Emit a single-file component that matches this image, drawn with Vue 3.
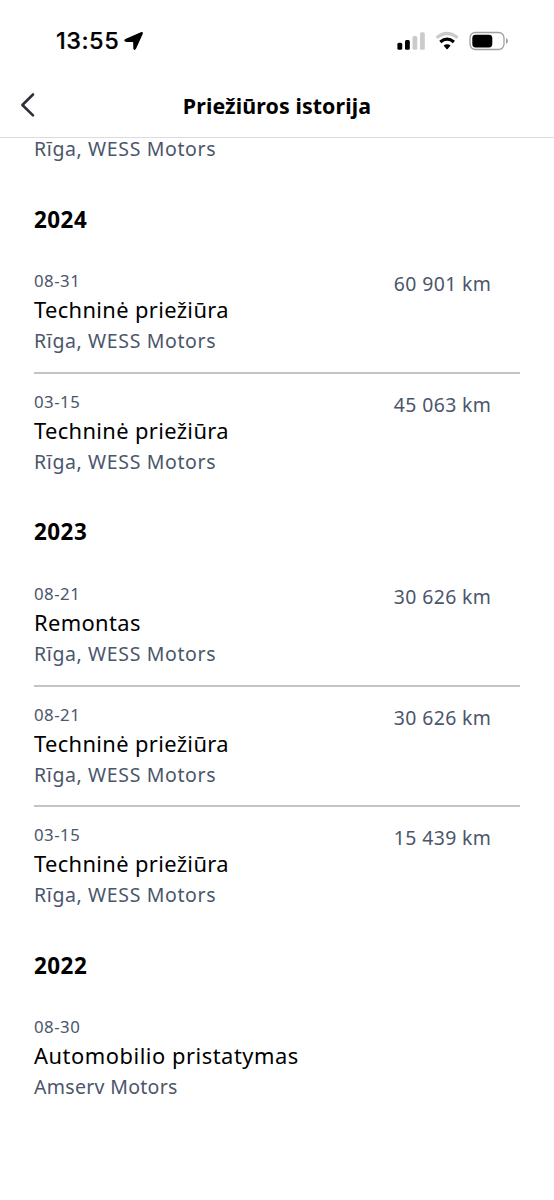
<script setup>
const groups = [
  {
    year: '2024',
    entries: [
      { date: '08-31', title: 'Techninė priežiūra', place: 'Rīga, WESS Motors', km: '60 901 km' },
      { date: '03-15', title: 'Techninė priežiūra', place: 'Rīga, WESS Motors', km: '45 063 km' },
    ],
  },
  {
    year: '2023',
    entries: [
      { date: '08-21', title: 'Remontas', place: 'Rīga, WESS Motors', km: '30 626 km' },
      { date: '08-21', title: 'Techninė priežiūra', place: 'Rīga, WESS Motors', km: '30 626 km' },
      { date: '03-15', title: 'Techninė priežiūra', place: 'Rīga, WESS Motors', km: '15 439 km' },
    ],
  },
  {
    year: '2022',
    entries: [
      { date: '08-30', title: 'Automobilio pristatymas', place: 'Amserv Motors', km: '', delivery: true },
    ],
  },
]
</script>

<template>
  <div class="screen">
    <div class="status">
      <div class="clock">
        <span class="time">13:55</span>
        <svg class="arrow" width="20" height="20" viewBox="0 0 20 20">
          <path d="M1.4 8 L16.8 1.2 Q19.6 0.3 18.7 3 L12 17.8 Q10.2 20.2 9.3 17.4 L9.2 11.7 Q9.2 11.1 8.6 11.1 L2.2 11 Q-1.2 10 1.4 8 Z" />
        </svg>
      </div>
      <svg class="indicators" width="114" height="20" viewBox="0 0 114 20">
        <rect x="0.4" y="11.8" width="4.8" height="7" rx="1.5" />
        <rect x="8" y="9" width="4.8" height="9.8" rx="1.5" />
        <rect x="15.5" y="5" width="4.8" height="13.8" rx="1.5" fill="#cbcbcb" />
        <rect x="23" y="1.3" width="4.8" height="17.5" rx="1.5" fill="#cbcbcb" />
        <path d="M39.6 6.8 Q50.1 -1.8 60.6 6.8" fill="none" stroke="#cbcbcb" stroke-width="3.2" />
        <path d="M43.3 11 Q50.1 5.2 56.9 11" fill="none" stroke="#000" stroke-width="3.2" />
        <path d="M46.6 14.6 Q50.1 11.8 53.6 14.6 L50.7 18 Q50.1 18.6 49.5 18 Z" />
        <rect x="73" y="1.5" width="34" height="17" rx="5.4" fill="#fff" stroke="#a0a0a0" stroke-width="1.3" />
        <rect x="75.3" y="3.8" width="20" height="12.6" rx="3.4" />
        <path d="M109 7.1 Q111 8 111 10.1 Q111 12.1 109 13 Z" fill="#a0a0a0" />
      </svg>
    </div>

    <header class="header">
      <svg class="back" width="16" height="26" viewBox="0 0 16 26">
        <path d="M13 2.5 L2.4 13 L13 23.4" fill="none" stroke="#2f2f38" stroke-width="2.6" stroke-linecap="round" stroke-linejoin="round" />
      </svg>
      <h1 class="heading">Priežiūros istorija</h1>
    </header>

    <main class="content">
      <div class="place previous">Rīga, WESS Motors</div>
      <section v-for="group in groups" :key="group.year" class="group">
        <h2 class="year">{{ group.year }}</h2>
        <article
          v-for="(entry, i) in group.entries"
          :key="i"
          class="entry"
          :class="{ delivery: entry.delivery }"
        >
          <div class="details">
            <div class="date">{{ entry.date }}</div>
            <div class="title">{{ entry.title }}</div>
            <div class="place">{{ entry.place }}</div>
          </div>
          <div v-if="entry.km" class="km">{{ entry.km }}</div>
        </article>
      </section>
    </main>
  </div>
</template>

<style>
body {
  margin: 0;
  background: #fff;
}
</style>

<style scoped>
.screen {
  width: 554px;
  height: 1200px;
  display: flex;
  flex-direction: column;
  background: #fff;
  color: #000;
  font-family: "Noto Sans", sans-serif;
}

.status {
  height: 77px;
  box-sizing: border-box;
  padding: 5.5px 43px 0 56px;
  display: flex;
  align-items: center;
  justify-content: space-between;
  flex-shrink: 0;
}

.clock {
  display: flex;
  align-items: center;
  gap: 5px;
}

.time {
  font: 500 23.5px/28px Inter, sans-serif;
  letter-spacing: 0.5px;
  -webkit-text-stroke: 0.2px #000;
}

.header {
  height: 61px;
  box-sizing: border-box;
  border-bottom: 1px solid #dcdcdc;
  display: grid;
  grid-template-columns: 40px 1fr 40px;
  align-items: center;
  flex-shrink: 0;
}

.back {
  margin: -5px 0 0 20px;
}

.heading {
  margin: -2px 0 0;
  text-align: center;
  font-size: 21.4px;
  line-height: 30px;
  letter-spacing: 0.1px;
  font-weight: 700;
}

.content {
  flex: 1;
  padding: 0 34px;
}

.year {
  margin: 23.1px 0 18.9px;
  font-size: 22.4px;
  line-height: 30px;
  letter-spacing: 0.5px;
  font-weight: 700;
}

.entry {
  height: 120.4px;
  box-sizing: border-box;
  padding: 15.9px 29px 0 0;
  display: flex;
  justify-content: space-between;
  align-items: flex-start;
}

.entry:not(:last-child) {
  border-bottom: 2px solid #c4c4c4;
}

.date {
  font-size: 16.8px;
  line-height: 24px;
  letter-spacing: 0.5px;
  color: #4b566b;
}

.title {
  font-size: 21.9px;
  line-height: 33px;
  letter-spacing: 0.36px;
}

.place {
  font-size: 19.5px;
  line-height: 30px;
  letter-spacing: 0.62px;
  color: #4b566b;
}

.previous {
  line-height: 22px;
  padding-bottom: 21.6px;
}

.delivery .title {
  letter-spacing: 0.52px;
}

.delivery .place {
  letter-spacing: 0.3px;
}

.km {
  font-size: 19.4px;
  line-height: 30px;
  letter-spacing: 0.4px;
  margin-right: -0.4px;
  color: #4b566b;
}
</style>
